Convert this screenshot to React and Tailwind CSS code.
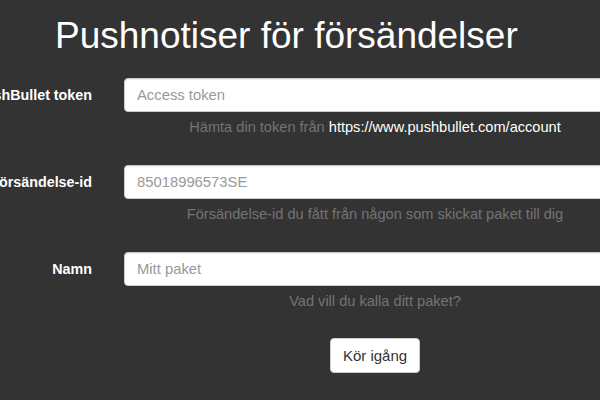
import React from 'react';

const fields = [
    { label: 'PushBullet token', placeholder: 'Access token', help: <>Hämta din token från <a className="text-white" href="#">https://www.pushbullet.com/account</a></> },
    { label: 'Försändelse-id', placeholder: '85018996573SE', help: 'Försändelse-id du fått från någon som skickat paket till dig' },
    { label: 'Namn', placeholder: 'Mitt paket', help: 'Vad vill du kalla ditt paket?' },
];

const App = () => {
    return (
        <div className="w-[600px] h-[400px] overflow-hidden bg-[#333333] text-white font-['Liberation_Sans',Arial,sans-serif]">
            <h1 className="pt-[16px] pl-[55px] text-[37px] leading-[40px] font-normal whitespace-nowrap">Pushnotiser för försändelser</h1>

            <form className="mt-[22px]">
                {fields.map((field) => (
                    <div key={field.label} className="flex mb-[28px]">
                        {/* label column, overflows to the left */}
                        <div className="w-[92px] shrink-0 flex justify-end">
                            <label className="pt-[7px] text-[14.3px] leading-[20px] font-bold whitespace-nowrap">{field.label}</label>
                        </div>
                        <div className="ml-[32px] w-[502px] shrink-0">
                            <input
                                type="text"
                                placeholder={field.placeholder}
                                className="block w-[520px] h-[34px] px-[12px] py-[6px] bg-white border border-[#cccccc] rounded-[4px] text-[14.8px] text-[#555555] placeholder:text-[#999999] shadow-[inset_0_1px_1px_rgba(0,0,0,0.075)] outline-none"
                            />
                            <p className="mt-[5px] text-[14.6px] leading-[20px] text-[#737373] text-center whitespace-nowrap">{field.help}</p>
                        </div>
                    </div>
                ))}

                <div className="flex">
                    <div className="ml-[124px] w-[502px] shrink-0 flex justify-center">
                        <button type="submit" className="-mt-[1px] h-[35px] px-[12px] bg-white border border-[#cccccc] rounded-[4px] text-[15px] leading-[20px] text-[#333333]">Kör igång</button>
                    </div>
                </div>
            </form>
        </div>
    );
};

export default App;
